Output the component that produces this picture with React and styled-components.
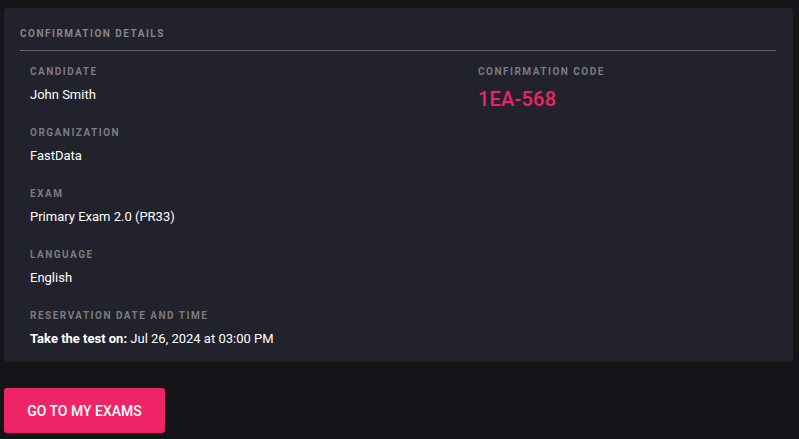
import React from "react";
import styled, { createGlobalStyle } from "styled-components";

const GlobalStyle = createGlobalStyle`
  html, body {
    margin: 0;
    padding: 0;
    background: #151419;
  }
  body {
    font-family: Roboto, "Liberation Sans", sans-serif;
    color: #ffffff;
    -webkit-font-smoothing: antialiased;
  }
`;

const Page = styled.div`
  padding: 8px 6px 0 4px;
  display: flex;
  flex-direction: column;
  align-items: flex-start;
  gap: 26px;
`;

const Card = styled.section`
  align-self: stretch;
  background: #22222c;
  border-radius: 4px;
  padding: 20px 17px 13px 16px;
`;

const Title = styled.h2`
  margin: 0;
  font-size: 10px;
  line-height: 12px;
  font-weight: 700;
  letter-spacing: 1.5px;
  color: #85858c;
  text-transform: uppercase;
`;

const Divider = styled.hr`
  margin: 10px 0 14px;
  border: 0;
  height: 1px;
  background: #64646c;
`;

const Grid = styled.div`
  display: grid;
  grid-template-columns: 448px 1fr;
  padding-left: 10px;
`;

const Column = styled.div`
  display: flex;
  flex-direction: column;
  gap: 21px;
`;

const Field = styled.div`
  display: flex;
  flex-direction: column;
  gap: ${(p) => (p.$big ? "8px" : "6px")};
`;

const Label = styled.div`
  font-size: 10px;
  line-height: 14px;
  font-weight: 700;
  letter-spacing: 1.5px;
  color: #7b7b82;
  text-transform: uppercase;
`;

const Value = styled.div`
  font-size: 13px;
  line-height: 20px;
  font-weight: 400;
  color: #ffffff;

  b {
    font-weight: 700;
  }
`;

const Code = styled.div`
  font-size: 20px;
  line-height: 24px;
  font-weight: 500;
  color: #ee2466;
  letter-spacing: 0.2px;
`;

const Button = styled.button`
  height: 45px;
  width: 161px;
  border: 0;
  border-radius: 3px;
  background: #ee2466;
  color: #ffffff;
  font-family: Roboto, "Liberation Sans", sans-serif;
  font-size: 14px;
  font-weight: 500;
  text-transform: uppercase;
  cursor: pointer;
  padding: 0 20px;
`;

const fields = [
  { label: "Candidate", value: "John Smith" },
  { label: "Organization", value: "FastData" },
  { label: "Exam", value: "Primary Exam 2.0 (PR33)" },
  { label: "Language", value: "English" },
];

export default function App() {
  return (
    <>
      <GlobalStyle />
      <Page>
        <Card>
          <Title>Confirmation Details</Title>
          <Divider />
          <Grid>
            <Column>
              {fields.map((f) => (
                <Field key={f.label}>
                  <Label>{f.label}</Label>
                  <Value>{f.value}</Value>
                </Field>
              ))}
              <Field>
                <Label>Reservation Date and Time</Label>
                <Value>
                  <b>Take the test on:</b> Jul 26, 2024 at 03:00 PM
                </Value>
              </Field>
            </Column>
            <Column>
              <Field $big>
                <Label>Confirmation Code</Label>
                <Code>1EA-568</Code>
              </Field>
            </Column>
          </Grid>
        </Card>
        <Button>Go to my exams</Button>
      </Page>
    </>
  );
}
